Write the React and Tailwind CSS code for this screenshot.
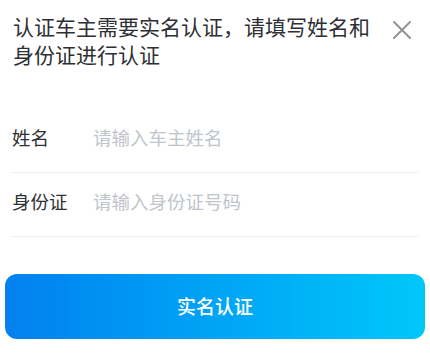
export default function App() {
  return (
    <div
      className="w-[430px] h-[357px] bg-white overflow-hidden"
      style={{ fontFamily: '"Noto Sans CJK SC", "Noto Sans", sans-serif' }}
    >
      <div className="flex items-start pl-[13px] pt-[12px]">
        <div className="w-[362px] text-[21px] leading-[28px] text-[#2e2f33]">
          认证车主需要实名认证，请填写姓名和身份证进行认证
        </div>
        <button className="ml-[17px] mt-[8px] w-[20px] h-[20px] flex items-center justify-center">
          <svg width="20" height="20" viewBox="0 0 20 20" fill="none">
            <path d="M2 2 L18 18 M18 2 L2 18" stroke="#909399" strokeWidth="2" strokeLinecap="round" />
          </svg>
        </button>
      </div>
      <div className="mt-[41px] px-[11px]">
        <div className="flex items-center h-[64px] pb-[5px] border-b border-[#ebedf0]">
          <div className="w-[82px] pl-[1px] text-[18.5px] text-[#303133]">姓名</div>
          <input
            className="flex-1 text-[18.5px] outline-none bg-transparent text-[#303133] placeholder:text-[#c0c4cc]"
            placeholder="请输入车主姓名"
          />
        </div>
        <div className="flex items-center h-[64px] pb-[5px] border-b border-[#ebedf0]">
          <div className="w-[82px] pl-[1px] text-[18.5px] text-[#303133]">身份证</div>
          <input
            className="flex-1 text-[18.5px] outline-none bg-transparent text-[#303133] placeholder:text-[#c0c4cc]"
            placeholder="请输入身份证号码"
          />
        </div>
      </div>
      <div className="px-[5px] mt-[37px]">
        <button className="w-full h-[65px] rounded-[12px] bg-linear-to-r from-[#0580ef] to-[#00c7fa] text-white text-[19px] font-medium flex items-center justify-center">
          实名认证
        </button>
      </div>
    </div>
  );
}
